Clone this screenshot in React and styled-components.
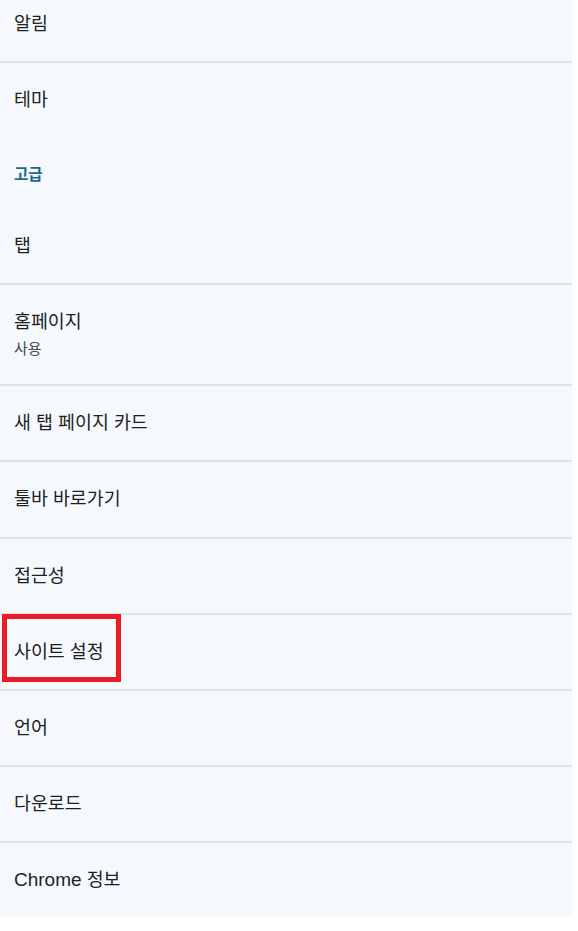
import styled, { createGlobalStyle } from 'styled-components'

const GlobalStyle = createGlobalStyle`
  html, body {
    margin: 0;
    padding: 0;
    background: #ffffff;
  }
  body {
    font-family: "Liberation Sans", "Noto Sans CJK KR", sans-serif;
    color: #1f1f1f;
    overflow: hidden;
  }
`

const Page = styled.div`
  width: 572px;
  height: 917px;
  overflow: hidden;
  background: #f5f8fc;
`

// the list is scrolled a little, so the first row is cut at the top
const List = styled.div`
  margin-top: -13px;
  display: flex;
  flex-direction: column;
`

const Row = styled.div`
  position: relative;
  display: flex;
  flex-direction: column;
  justify-content: center;
  height: ${({ tall }) => (tall ? '99px' : '74.2px')};
  padding-left: 14px;
  border-bottom: ${({ last }) => (last ? 'none' : '2px solid #dfe2e7')};
`

const Title = styled.span`
  font-size: 18.4px;
  line-height: 24px;
  color: #1f1f1f;
`

const Latin = styled.span`
  font-size: 19px;
`

const Subtitle = styled.span`
  font-size: 15px;
  line-height: 20px;
  margin-top: 5px;
  color: #474747;
`

const SectionHeader = styled.div`
  display: flex;
  align-items: center;
  height: 71.6px;
  padding-left: 14px;
  font-size: 15.5px;
  font-weight: 700;
  color: #1d6a86;
`

const Highlight = styled.div`
  position: absolute;
  left: 2px;
  top: -1px;
  width: 119px;
  height: 68px;
  box-sizing: border-box;
  border: 5px solid #ec1c24;
  pointer-events: none;
`

function App() {
  return (
    <>
      <GlobalStyle />
      <Page>
        <List>
          <Row>
            <Title>알림</Title>
          </Row>
          <Row last>
            <Title>테마</Title>
          </Row>
          <SectionHeader>고급</SectionHeader>
          <Row>
            <Title>탭</Title>
          </Row>
          <Row tall>
            <Title>홈페이지</Title>
            <Subtitle>사용</Subtitle>
          </Row>
          <Row>
            <Title>새 탭 페이지 카드</Title>
          </Row>
          <Row>
            <Title>툴바 바로가기</Title>
          </Row>
          <Row>
            <Title>접근성</Title>
          </Row>
          <Row>
            <Highlight />
            <Title>사이트 설정</Title>
          </Row>
          <Row>
            <Title>언어</Title>
          </Row>
          <Row>
            <Title>다운로드</Title>
          </Row>
          <Row last>
            <Title>
              <Latin>Chrome</Latin> 정보
            </Title>
          </Row>
        </List>
      </Page>
    </>
  )
}

export default App
